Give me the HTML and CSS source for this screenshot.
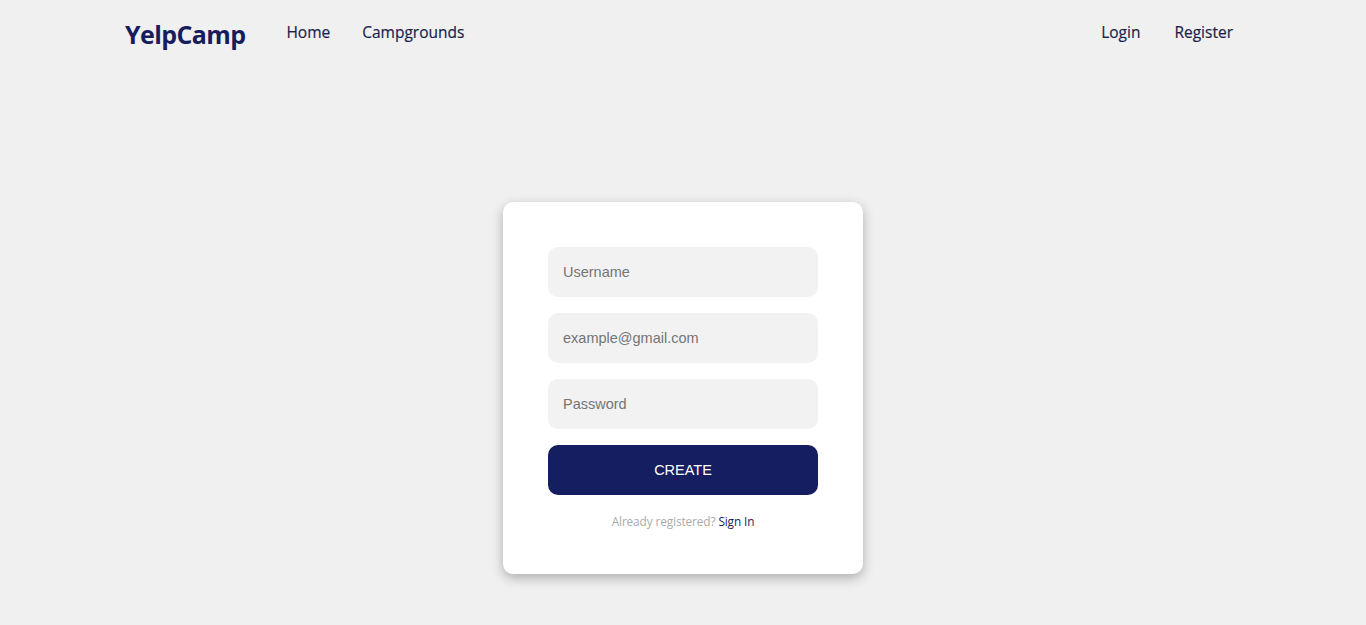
FILE: index.html
```html
<!DOCTYPE html>
<html>
<head>
<meta charset="utf-8">
<link rel="stylesheet" href="styles.css">
</head>
<body>
<nav class="navbar">
  <div class="nav-left">
    <a class="brand" href="#">YelpCamp</a>
    <a class="nav-link" href="#">Home</a>
    <a class="nav-link" href="#">Campgrounds</a>
  </div>
  <div class="nav-right">
    <a class="nav-link" href="#">Login</a>
    <a class="nav-link" href="#">Register</a>
  </div>
</nav>
<main class="main">
  <form class="card">
    <input class="field" type="text" placeholder="Username">
    <input class="field" type="email" placeholder="example@gmail.com">
    <input class="field" type="password" placeholder="Password">
    <button class="btn" type="button">CREATE</button>
    <p class="note">Already registered? <a href="#">Sign In</a></p>
  </form>
</main>
</body>
</html>
```
FILE: styles.css
```css
* { box-sizing: border-box; }
html, body { margin: 0; padding: 0; }
body {
  background: #f0f0f0;
  font-family: "Open Sans", "Noto Sans", sans-serif;
  height: 625px;
  overflow: hidden;
}
a { text-decoration: none; }
.navbar {
  display: flex;
  justify-content: space-between;
  align-items: center;
  padding: 0 133px 0 125px;
  height: 64px;
}
.nav-left, .nav-right {
  display: flex;
  align-items: center;
}
.brand {
  font-family: "Open Sans", sans-serif;
  font-weight: 700;
  font-size: 25px;
  letter-spacing: -0.6px;
  color: #171d5c;
  margin-right: 41px;
  margin-top: 3px;
}
.nav-left .nav-link { margin-right: 32px; }
.nav-right .nav-link { margin-left: 34px; }
.nav-link {
  font-size: 15.5px;
  font-weight: 500;
  color: #1a1f4c;
  letter-spacing: 0;
  -webkit-text-stroke: 0.2px #1a1f4c;
}
.main {
  display: flex;
  justify-content: center;
  padding-top: 138px;
}
.card {
  width: 360px;
  background: #fff;
  border-radius: 10px;
  box-shadow: 0 4px 12px rgba(0,0,0,0.28);
  padding: 45px 45px 45px;
  display: flex;
  flex-direction: column;
  gap: 16px;
  margin: 0;
}
.field {
  height: 50px;
  border: none;
  border-radius: 10px;
  background: #f2f2f2;
  padding: 0 15px;
  font-family: "Liberation Sans", Arial, sans-serif;
  font-size: 14.5px;
  color: #333;
  outline: none;
}
.field::placeholder { color: #757575; }
.btn {
  height: 50px;
  border: none;
  border-radius: 10px;
  background: #151e60;
  color: #fff;
  font-family: "Liberation Sans", Arial, sans-serif;
  font-size: 14.5px;
  cursor: pointer;
}
.note {
  margin: 2px 0 0;
  text-align: center;
  font-size: 11.8px;
  line-height: 16px;
  color: #aaaaaa;
  letter-spacing: -0.1px;
}
.note a { color: #151e60; }
```
